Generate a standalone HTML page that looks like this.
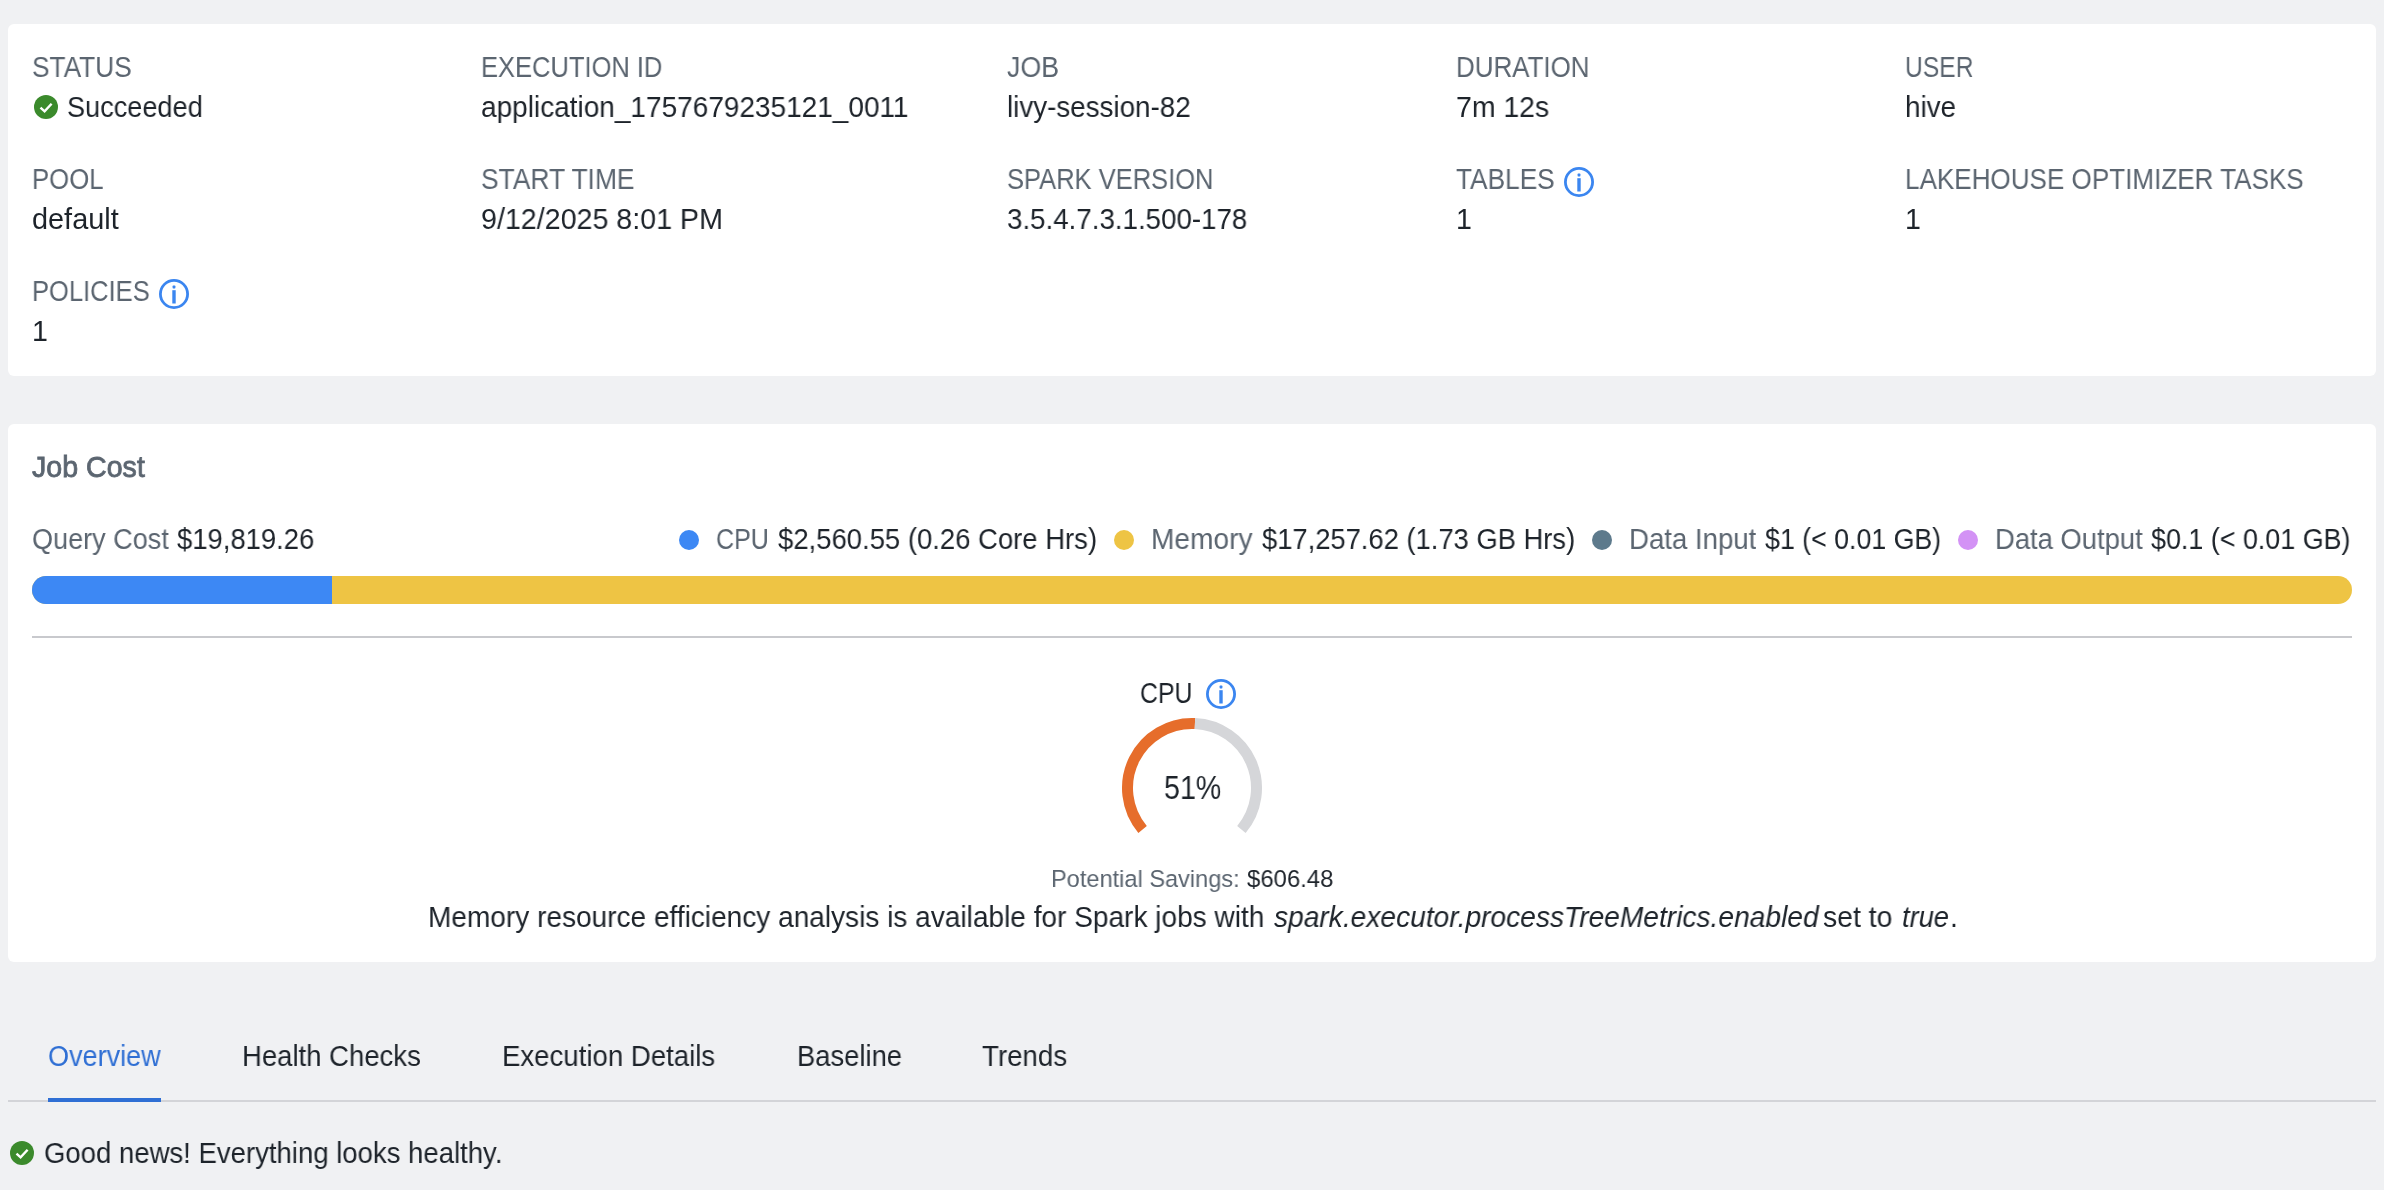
<!DOCTYPE html>
<html><head><meta charset="utf-8"><style>
html,body{margin:0;padding:0;}
body{width:2384px;height:1190px;overflow:hidden;background:#f0f1f3;position:relative;font-family:"Liberation Sans",sans-serif;}
.card{position:absolute;left:8px;width:2368px;background:#fff;border-radius:6px;}
.t{position:absolute;white-space:nowrap;transform-origin:0 0;will-change:transform;}
.ic{position:absolute;overflow:visible;}
.dot{position:absolute;width:20px;height:20px;border-radius:50%;}
.bar{position:absolute;left:32px;top:576px;width:2320px;height:28px;border-radius:14px;background:#eec444;overflow:hidden;}
.bar i{position:absolute;left:0;top:0;width:300px;height:28px;background:#3d88f4;}
</style></head><body>
<div class="card" style="top:24px;height:352px"></div>
<div class="card" style="top:424px;height:538px"></div>
<div class="bar"><i></i></div>
<div style="position:absolute;left:32px;top:636px;width:2320px;height:2px;background:#c8c9cd"></div>
<div style="position:absolute;left:8px;top:1100px;width:2368px;height:2px;background:#d3d4d8"></div>
<div style="position:absolute;left:48px;top:1098px;width:113px;height:4px;background:#2f6fd4"></div>
<svg class="ic" style="left:0;top:0" width="2384" height="1190">
<path d="M1142.59 829.46 A64.5 64.5 0 0 1 1194.93 723.57" fill="none" stroke="#e66d2b" stroke-width="11"/>
<path d="M1194.93 723.57 A64.5 64.5 0 0 1 1241.41 829.46" fill="none" stroke="#d5d6d9" stroke-width="11"/>
</svg>
<div class="t" style="left:32.20px;top:53.05px;font-size:29.00px;line-height:29.00px;transform:scaleX(0.9059);color:#5b6570;">STATUS</div>
<svg class="ic" style="left:34.0px;top:95.0px" width="24" height="24" viewBox="0 0 24 24"><circle cx="12" cy="12" r="12" fill="#3b8a2c"/><path d="M6.5 12.6L10.6 16.4L17.6 8.7" fill="none" stroke="#fff" stroke-width="2.4"/></svg>
<div class="t" style="left:67.40px;top:93.38px;font-size:28.60px;line-height:28.60px;transform:scaleX(0.9487);color:#1d232a;">Succeeded</div>
<div class="t" style="left:481.40px;top:53.05px;font-size:29.00px;line-height:29.00px;transform:scaleX(0.8793);color:#5b6570;">EXECUTION ID</div>
<div class="t" style="left:481.40px;top:93.38px;font-size:28.60px;line-height:28.60px;transform:scaleX(0.9790);color:#1d232a;">application_1757679235121_0011</div>
<div class="t" style="left:1007.40px;top:53.05px;font-size:29.00px;line-height:29.00px;transform:scaleX(0.9237);color:#5b6570;">JOB</div>
<div class="t" style="left:1007.40px;top:93.38px;font-size:28.60px;line-height:28.60px;transform:scaleX(0.9715);color:#1d232a;">livy-session-82</div>
<div class="t" style="left:1456.20px;top:53.05px;font-size:29.00px;line-height:29.00px;transform:scaleX(0.8945);color:#5b6570;">DURATION</div>
<div class="t" style="left:1456.20px;top:93.38px;font-size:28.60px;line-height:28.60px;transform:scaleX(0.9935);color:#1d232a;">7m 12s</div>
<div class="t" style="left:1904.80px;top:53.05px;font-size:29.00px;line-height:29.00px;transform:scaleX(0.8497);color:#5b6570;">USER</div>
<div class="t" style="left:1904.80px;top:93.38px;font-size:28.60px;line-height:28.60px;transform:scaleX(0.9737);color:#1d232a;">hive</div>
<div class="t" style="left:32.10px;top:165.05px;font-size:29.00px;line-height:29.00px;transform:scaleX(0.8869);color:#5b6570;">POOL</div>
<div class="t" style="left:32.10px;top:205.38px;font-size:28.60px;line-height:28.60px;transform:scaleX(1.0100);color:#1d232a;">default</div>
<div class="t" style="left:481.40px;top:165.05px;font-size:29.00px;line-height:29.00px;transform:scaleX(0.9102);color:#5b6570;">START TIME</div>
<div class="t" style="left:481.40px;top:205.05px;font-size:29.00px;line-height:29.00px;transform:scaleX(0.9871);color:#1d232a;">9/12/2025 8:01 PM</div>
<div class="t" style="left:1007.40px;top:165.05px;font-size:29.00px;line-height:29.00px;transform:scaleX(0.8796);color:#5b6570;">SPARK VERSION</div>
<div class="t" style="left:1007.40px;top:205.38px;font-size:28.60px;line-height:28.60px;transform:scaleX(0.9689);color:#1d232a;">3.5.4.7.3.1.500-178</div>
<div class="t" style="left:1456.20px;top:165.05px;font-size:29.00px;line-height:29.00px;transform:scaleX(0.9043);color:#5b6570;">TABLES</div>
<svg class="ic" style="left:1564px;top:167px" width="30" height="30" viewBox="0 0 30 30"><circle cx="15" cy="15" r="13.6" fill="none" stroke="#3b86f0" stroke-width="2.8"/><rect x="13.6" y="6.6" width="2.8" height="2.8" rx="0.6" fill="#3b86f0"/><rect x="13.3" y="11.2" width="3.4" height="13.3" fill="#3b86f0"/></svg>
<div class="t" style="left:1456.20px;top:205.38px;font-size:28.60px;line-height:28.60px;transform:scaleX(1.0000);color:#1d232a;">1</div>
<div class="t" style="left:1904.80px;top:165.05px;font-size:29.00px;line-height:29.00px;transform:scaleX(0.8986);color:#5b6570;">LAKEHOUSE OPTIMIZER TASKS</div>
<div class="t" style="left:1904.80px;top:205.38px;font-size:28.60px;line-height:28.60px;transform:scaleX(1.0000);color:#1d232a;">1</div>
<div class="t" style="left:32.10px;top:277.05px;font-size:29.00px;line-height:29.00px;transform:scaleX(0.8802);color:#5b6570;">POLICIES</div>
<svg class="ic" style="left:159px;top:279px" width="30" height="30" viewBox="0 0 30 30"><circle cx="15" cy="15" r="13.6" fill="none" stroke="#3b86f0" stroke-width="2.8"/><rect x="13.6" y="6.6" width="2.8" height="2.8" rx="0.6" fill="#3b86f0"/><rect x="13.3" y="11.2" width="3.4" height="13.3" fill="#3b86f0"/></svg>
<div class="t" style="left:32.10px;top:317.38px;font-size:28.60px;line-height:28.60px;transform:scaleX(1.0000);color:#1d232a;">1</div>
<div class="t" style="left:31.90px;top:453.18px;font-size:28.60px;line-height:28.60px;transform:scaleX(0.9989);color:#5b6570;-webkit-text-stroke:0.8px #5b6570;">Job Cost</div>
<div class="t" style="left:32.40px;top:525.38px;font-size:28.60px;line-height:28.60px;transform:scaleX(0.9462);color:#5b6570;">Query Cost</div>
<div class="t" style="left:176.70px;top:525.38px;font-size:28.60px;line-height:28.60px;transform:scaleX(0.9592);color:#1d232a;">$19,819.26</div>
<div class="dot" style="left:679px;top:530px;background:#3d88f4"></div>
<div class="t" style="left:715.90px;top:525.05px;font-size:29.00px;line-height:29.00px;transform:scaleX(0.8629);color:#5b6570;">CPU</div>
<div class="t" style="left:778.00px;top:525.38px;font-size:28.60px;line-height:28.60px;transform:scaleX(0.9605);color:#1d232a;">$2,560.55 (0.26 Core Hrs)</div>
<div class="dot" style="left:1114px;top:530px;background:#eec444"></div>
<div class="t" style="left:1151.20px;top:525.38px;font-size:28.60px;line-height:28.60px;transform:scaleX(0.9831);color:#5b6570;">Memory</div>
<div class="t" style="left:1261.70px;top:525.38px;font-size:28.60px;line-height:28.60px;transform:scaleX(0.9564);color:#1d232a;">$17,257.62 (1.73 GB Hrs)</div>
<div class="dot" style="left:1592px;top:530px;background:#5d7a8c"></div>
<div class="t" style="left:1628.70px;top:525.38px;font-size:28.60px;line-height:28.60px;transform:scaleX(0.9652);color:#5b6570;">Data Input</div>
<div class="t" style="left:1764.60px;top:525.05px;font-size:29.00px;line-height:29.00px;transform:scaleX(0.9222);color:#1d232a;">$1 (&lt; 0.01 GB)</div>
<div class="dot" style="left:1958px;top:530px;background:#d392f5"></div>
<div class="t" style="left:1994.80px;top:525.38px;font-size:28.60px;line-height:28.60px;transform:scaleX(0.9581);color:#5b6570;">Data Output</div>
<div class="t" style="left:2151.20px;top:525.05px;font-size:29.00px;line-height:29.00px;transform:scaleX(0.9267);color:#1d232a;">$0.1 (&lt; 0.01 GB)</div>
<div class="t" style="left:1139.50px;top:679.05px;font-size:29.00px;line-height:29.00px;transform:scaleX(0.8563);color:#1d232a;">CPU</div>
<svg class="ic" style="left:1206px;top:679px" width="30" height="30" viewBox="0 0 30 30"><circle cx="15" cy="15" r="13.6" fill="none" stroke="#3b86f0" stroke-width="2.8"/><rect x="13.6" y="6.6" width="2.8" height="2.8" rx="0.6" fill="#3b86f0"/><rect x="13.3" y="11.2" width="3.4" height="13.3" fill="#3b86f0"/></svg>
<div class="t" style="left:1163.90px;top:771.63px;font-size:32.69px;line-height:32.69px;transform:scaleX(0.8765);color:#1d232a;">51%</div>
<div class="t" style="left:1051.00px;top:866.54px;font-size:24.51px;line-height:24.51px;transform:scaleX(0.9621);color:#5b6570;">Potential Savings:</div>
<div class="t" style="left:1246.70px;top:866.54px;font-size:24.51px;line-height:24.51px;transform:scaleX(0.9750);color:#1d232a;">$606.48</div>
<div class="t" style="left:428.30px;top:903.18px;font-size:28.60px;line-height:28.60px;transform:scaleX(0.9806);color:#1d232a;">Memory resource efficiency analysis is available for Spark jobs with</div>
<div class="t" style="left:1273.90px;top:903.18px;font-size:28.60px;line-height:28.60px;transform:scaleX(0.9847);color:#1d232a;font-style:italic;">spark.executor.processTreeMetrics.enabled</div>
<div class="t" style="left:1823.30px;top:903.18px;font-size:28.60px;line-height:28.60px;transform:scaleX(0.9925);color:#1d232a;">set to</div>
<div class="t" style="left:1902.20px;top:903.18px;font-size:28.60px;line-height:28.60px;transform:scaleX(0.9547);color:#1d232a;font-style:italic;">true</div>
<div class="t" style="left:1949.80px;top:903.18px;font-size:28.60px;line-height:28.60px;transform:scaleX(1.0000);color:#1d232a;">.</div>
<div class="t" style="left:48.30px;top:1041.58px;font-size:28.60px;line-height:28.60px;transform:scaleX(0.9458);color:#2f6fd4;">Overview</div>
<div class="t" style="left:242.10px;top:1041.58px;font-size:28.60px;line-height:28.60px;transform:scaleX(0.9616);color:#1d232a;">Health Checks</div>
<div class="t" style="left:502.30px;top:1041.58px;font-size:28.60px;line-height:28.60px;transform:scaleX(0.9650);color:#1d232a;">Execution Details</div>
<div class="t" style="left:796.60px;top:1041.58px;font-size:28.60px;line-height:28.60px;transform:scaleX(0.9573);color:#1d232a;">Baseline</div>
<div class="t" style="left:981.60px;top:1041.58px;font-size:28.60px;line-height:28.60px;transform:scaleX(0.9677);color:#1d232a;">Trends</div>
<svg class="ic" style="left:10.0px;top:1141.0px" width="24" height="24" viewBox="0 0 24 24"><circle cx="12" cy="12" r="12" fill="#3b8a2c"/><path d="M6.5 12.6L10.6 16.4L17.6 8.7" fill="none" stroke="#fff" stroke-width="2.4"/></svg>
<div class="t" style="left:43.70px;top:1138.47px;font-size:30.03px;line-height:30.03px;transform:scaleX(0.9169);color:#1d232a;">Good news! Everything looks healthy.</div>
</body></html>
